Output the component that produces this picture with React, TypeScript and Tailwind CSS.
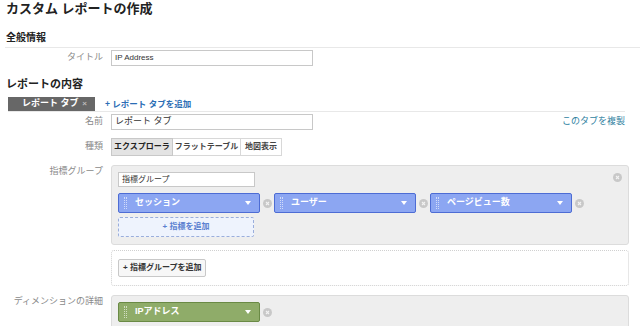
import React from 'react';

const font = { fontFamily: '"Liberation Sans", "Noto Sans CJK JP", sans-serif' };

function CloseDot({ className = '' }: { className?: string }) {
  return (
    <span className={`inline-flex items-center justify-center w-[9px] h-[9px] rounded-full bg-[#c8c8c8] ${className}`}>
      <svg width="5" height="5" viewBox="0 0 5 5">
        <path d="M1 1L4 4M4 1L1 4" stroke="#f2f2f2" strokeWidth="1.1" />
      </svg>
    </span>
  );
}

function Chip({ label, color }: { label: string; color: 'blue' | 'green' }) {
  const cls =
    color === 'blue'
      ? 'bg-[#8ca6f2] border-[#4d6cd4]'
      : 'bg-[#8fac69] border-[#6a8a45]';
  return (
    <div className="flex items-center gap-[3px]">
      <div className={`w-[142px] h-[20px] border rounded-[2px] flex items-center pl-[5px] pr-[8px] ${cls}`}>
        <span className="w-[3px] h-[12px] border-l border-r border-dotted border-white/60 mr-[8px]" />
        <span className="text-[9px] font-bold text-white flex-1">{label}</span>
        <svg width="6" height="4" viewBox="0 0 6 4">
          <path d="M0 0H6L3 4Z" fill="#fff" />
        </svg>
      </div>
      <CloseDot />
    </div>
  );
}

function Row({ label, children, className = '' }: { label: string; children: React.ReactNode; className?: string }) {
  return (
    <div className={`flex ${className}`}>
      <div className="w-[104px] shrink-0 text-right pr-[1px] text-[9px] text-[#8a8a8a]">{label}</div>
      <div className="flex-1 pl-[7px]">{children}</div>
    </div>
  );
}

export default function App() {
  return (
    <div className="w-[640px] h-[326px] overflow-hidden bg-white text-[#333]" style={font}>
      <div className="pl-[6px] pt-[1px]">
        <h1 className="text-[13px] font-bold text-[#222] leading-[15px]">カスタム レポートの作成</h1>
        <h2 className="mt-[16px] text-[10px] font-bold text-[#222] leading-[12px]">全般情報</h2>
      </div>
      <div className="ml-[5px] mt-[3px] border-t border-[#e8e8e8]" />
      <Row label="タイトル" className="mt-[2px] items-center">
        <div className="w-[202px] h-[16px] border border-[#c8c8c8] flex items-center px-[3px] text-[8px] text-[#333]">IP Address</div>
      </Row>
      <h2 className="pl-[6px] mt-[12px] text-[11px] font-bold text-[#222] leading-[13px]">レポートの内容</h2>
      <div className="mt-[6px] ml-[8px] mr-[15px] flex items-end border-b border-[#e8e8e8]">
        <div className="w-[87px] h-[14px] bg-[#676767] flex items-center pl-[14px] pr-[8px] text-[9px] font-bold text-white">
          <span className="flex-1">レポート タブ</span>
          <span className="text-[8px] text-[#bbb]">×</span>
        </div>
        <span className="ml-[10px] mb-[1px] text-[8.5px] text-[#2a6db5] font-semibold leading-[12px]">+ レポート タブを追加</span>
      </div>
      <Row label="名前" className="mt-[2px] items-center">
        <div className="flex items-center">
          <div className="w-[202px] h-[16px] border border-[#c8c8c8] flex items-center px-[3px] text-[9px] text-[#333]">レポート タブ</div>
          <span className="ml-auto mr-[15px] text-[9px] text-[#2f7f9f]">このタブを複製</span>
        </div>
      </Row>
      <Row label="種類" className="mt-[8px] items-center">
        <div className="flex h-[18px] text-[8px] font-bold">
          <div className="w-[62px] flex items-center justify-center bg-[#e3e3e3] border border-[#c8c8c8] text-[#222]">エクスプローラ</div>
          <div className="w-[68px] flex items-center justify-center bg-white border-y border-r border-[#d8d8d8] text-[#444]">フラットテーブル</div>
          <div className="w-[41px] flex items-center justify-center bg-white border-y border-r border-[#d8d8d8] text-[#444]">地図表示</div>
        </div>
      </Row>
      <Row label="指標グループ" className="mt-[9px] items-start">
        <div className="mr-[11px] bg-[#eeeeee] border border-[#dcdcdc] rounded-[3px] px-[6px] pt-[6px] pb-[7px] relative">
          <CloseDot className="absolute right-[6px] top-[7px]" />
          <div className="w-[137px] h-[15px] bg-white border border-[#c8c8c8] flex items-center px-[3px] text-[8px] text-[#333]">指標グループ</div>
          <div className="mt-[6px] flex gap-[2px]">
            <Chip label="セッション" color="blue" />
            <Chip label="ユーザー" color="blue" />
            <Chip label="ページビュー数" color="blue" />
          </div>
          <div className="mt-[4px] w-[136px] h-[20px] border border-dashed border-[#9aaedc] bg-[#eef3fd] rounded-[2px] flex items-center justify-center text-[8px] font-bold text-[#5a7fd0]">
            + 指標を追加
          </div>
        </div>
        <div className="mt-[5px] mr-[11px] h-[36px] border border-dotted border-[#d0d0d0] rounded-[3px] flex items-center px-[6px]">
          <div className="h-[18px] px-[4px] border border-[#c8c8c8] bg-[#f7f7f7] rounded-[2px] flex items-center text-[8px] font-bold text-[#333]">+ 指標グループを追加</div>
        </div>
      </Row>
      <Row label="ディメンションの詳細" className="mt-[9px] items-start">
        <div className="mr-[11px] h-[40px] bg-[#eeeeee] border border-[#dcdcdc] rounded-[3px] px-[6px] pt-[6px]">
          <Chip label="IPアドレス" color="green" />
        </div>
      </Row>
    </div>
  );
}
